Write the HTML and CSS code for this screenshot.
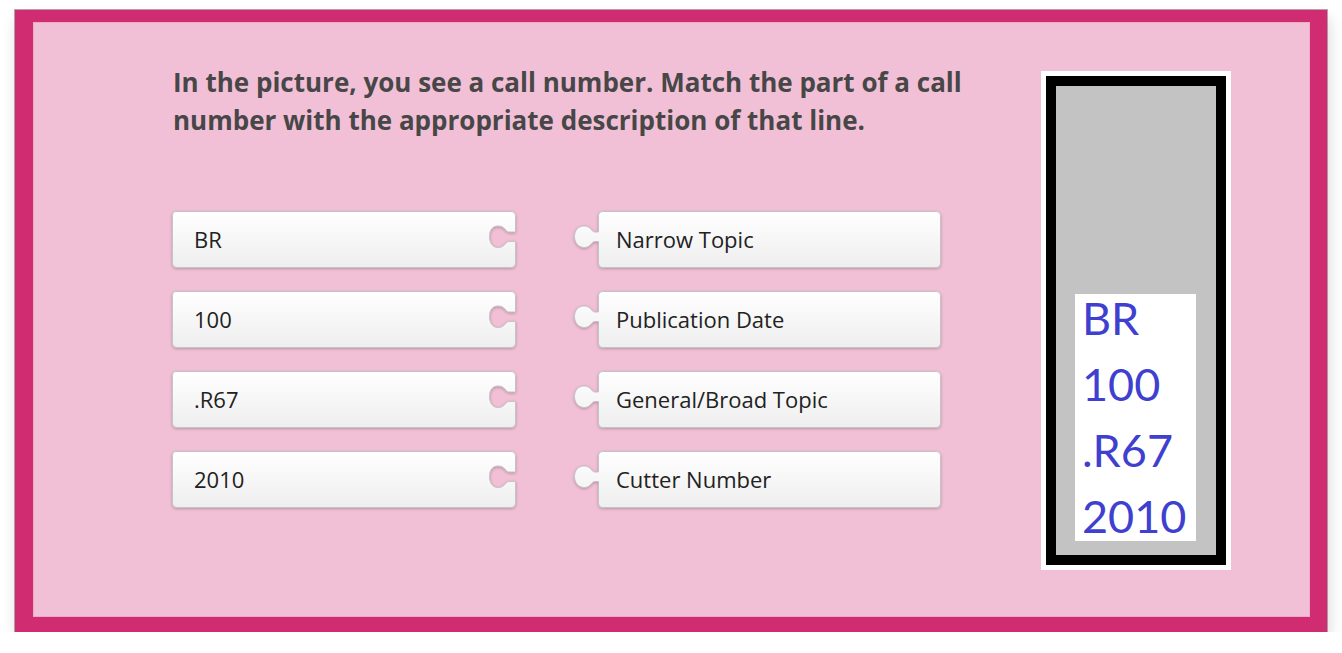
FILE: index.html
```html
<!DOCTYPE html>
<html>
<head>
<meta charset="utf-8">
<link rel="stylesheet" href="styles.css">
</head>
<body>
<div class="frame">
  <div class="inner">
    <div class="main">
      <h1 class="question">In the picture, you see a call number. Match the part of a call number with the appropriate description of that line.</h1>
      <div class="pairs">
        <div class="row">
          <div class="piece left"><svg class="shape" viewBox="0 0 345 58" width="345" height="58"><use href="#lshape"/></svg><span>BR</span></div>
          <div class="piece right"><svg class="shape" viewBox="-25 0 370 58" width="370" height="58"><use href="#rshape"/></svg><span>Narrow Topic</span></div>
        </div>
        <div class="row">
          <div class="piece left"><svg class="shape" viewBox="0 0 345 58" width="345" height="58"><use href="#lshape"/></svg><span>100</span></div>
          <div class="piece right"><svg class="shape" viewBox="-25 0 370 58" width="370" height="58"><use href="#rshape"/></svg><span>Publication Date</span></div>
        </div>
        <div class="row">
          <div class="piece left"><svg class="shape" viewBox="0 0 345 58" width="345" height="58"><use href="#lshape"/></svg><span>.R67</span></div>
          <div class="piece right"><svg class="shape" viewBox="-25 0 370 58" width="370" height="58"><use href="#rshape"/></svg><span>General/Broad Topic</span></div>
        </div>
        <div class="row">
          <div class="piece left"><svg class="shape" viewBox="0 0 345 58" width="345" height="58"><use href="#lshape"/></svg><span>2010</span></div>
          <div class="piece right"><svg class="shape" viewBox="-25 0 370 58" width="370" height="58"><use href="#rshape"/></svg><span>Cutter Number</span></div>
        </div>
      </div>
    </div>
    <div class="picture">
      <div class="spine">
        <div class="label">
          <div class="lines">
            <div>BR</div>
            <div>100</div>
            <div>.R67</div>
            <div>2010</div>
          </div>
        </div>
      </div>
    </div>
  </div>
</div>
<svg class="defs" width="0" height="0">
  <defs>
    <linearGradient id="g" x1="0" y1="0" x2="0" y2="1">
      <stop offset="0" stop-color="#ffffff"/>
      <stop offset="1" stop-color="#eeeeee"/>
    </linearGradient>
    <path id="lshape" fill="url(#g)" stroke="#c4c4c4" stroke-width="1"
      d="M4.5,0.5 H339.5 A4,4 0 0 1 343.5,4.5 V21 H337 C333,21 333.5,15 326,15 C320,15 317.5,20 317.5,25.5 C317.5,31 320,36.5 326,36.5 C333.5,36.5 333,30.5 337,30.5 H343.5 V52.5 A4,4 0 0 1 339.5,56.5 H4.5 A4,4 0 0 1 0.5,52.5 V4.5 A4,4 0 0 1 4.5,0.5 Z"/>
    <path id="rshape" fill="url(#g)" stroke="#c4c4c4" stroke-width="1"
      d="M4.5,0.5 H338.5 A4,4 0 0 1 342.5,4.5 V52.5 A4,4 0 0 1 338.5,56.5 H4.5 A4,4 0 0 1 0.5,52.5 V30.5 H-3 C-7,30.5 -6.5,36.5 -14,36.5 C-20,36.5 -23.5,31 -23.5,25.5 C-23.5,20 -20,15 -14,15 C-6.5,15 -7,21 -3,21 H0.5 V4.5 A4,4 0 0 1 4.5,0.5 Z"/>
  </defs>
</svg>
</body>
</html>
```
FILE: styles.css
```css
html, body {
  margin: 0;
  padding: 0;
  background: #ffffff;
}

body {
  font-family: "Open Sans", "Liberation Sans", sans-serif;
}

.defs {
  position: absolute;
  width: 0;
  height: 0;
}

.frame {
  margin: 10px 0 0 15px;
  width: 1312px;
  height: 622px;
  box-sizing: border-box;
  background: #cf2c72;
  padding: 12px 17px 15px 18px;
  box-shadow: 0 0 0 1px rgba(120, 90, 100, 0.55), 2px 8px 14px rgba(0, 0, 0, 0.16);
}

.inner {
  height: 100%;
  background: #f2c0d6;
  box-shadow: inset 0 0 0 1px #f0a9c6;
  display: flex;
  align-items: flex-start;
}

.main {
  margin-left: 140px;
  padding-top: 41px;
  width: 830px;
}

.question {
  margin: 0;
  font-size: 26px;
  line-height: 38px;
  font-weight: 700;
  color: #474747;
  width: 830px;
}

.pairs {
  margin-top: 72px;
  display: flex;
  flex-direction: column;
  gap: 23px;
}

.row {
  display: flex;
  gap: 82px;
}

.piece {
  position: relative;
  height: 57px;
  display: flex;
  align-items: center;
  font-size: 22px;
  color: #222222;
}

.piece.left {
  width: 344px;
  margin-left: -1px;
}

.piece.right {
  width: 343px;
}

.shape {
  position: absolute;
  top: 0;
  left: 0;
  filter: drop-shadow(0 1.5px 1.5px rgba(0, 0, 0, 0.24));
  overflow: visible;
}

.piece.right .shape {
  left: -25px;
}

.piece span {
  position: relative;
  padding-left: 22px;
  margin-top: -1px;
}

.piece.right span {
  padding-left: 18px;
}

.picture {
  margin-left: auto;
  margin-right: 79px;
  margin-top: 49px;
  background: #ffffff;
  padding: 5px;
}

.spine {
  width: 141px;
  height: 455px;
  border: 10px solid #000000;
  background: #c3c3c3;
  display: flex;
  align-items: flex-end;
  padding: 0 0 14px 19px;
  box-sizing: content-box;
}

.label {
  width: 114px;
  height: 247px;
  background: #ffffff;
  padding-left: 7px;
}

.lines {
  margin-top: -9px;
  font-family: Lato, "Noto Sans", sans-serif;
  font-size: 45px;
  line-height: 66px;
  color: #3f3fd0;
}
```
